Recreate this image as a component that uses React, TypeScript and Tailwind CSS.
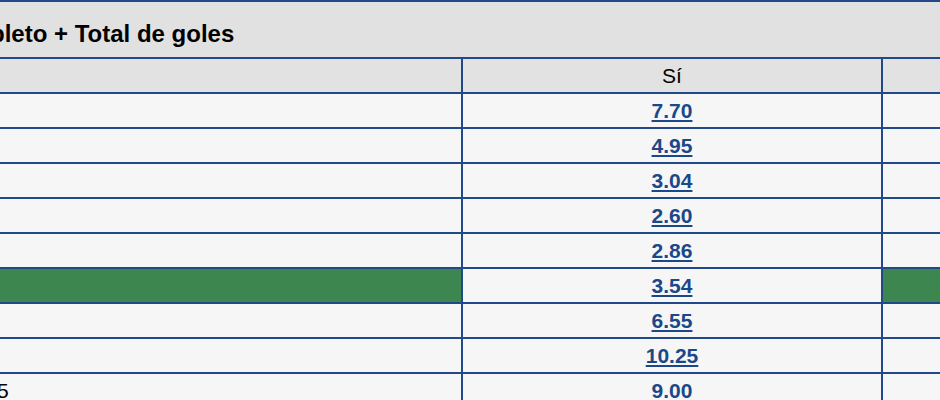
const rows = [
  { label: 'Local y Menos de 1.5', yes: '7.70', no: '1.08' },
  { label: 'Local y Más de 1.5', yes: '4.95', no: '1.16' },
  { label: 'Local y Menos de 2.5', yes: '3.04', no: '1.36' },
  { label: 'Local y Más de 2.5', yes: '2.60', no: '1.48' },
  { label: 'Local y Menos de 3.5', yes: '2.86', no: '1.40' },
  { label: 'Local y Más de 3.5', yes: '3.54', no: '1.28', active: true },
  { label: 'Local y Menos de 4.5', yes: '6.55', no: '1.11' },
  { label: 'Local y Más de 4.5', yes: '10.25', no: '1.04' },
  { label: 'Empate y Menos de 1.5', yes: '9.00', no: '1.06' },
]

const Odd = ({ value }: { value: string }) => (
  <a
    className="font-bold text-[#1b4889] underline decoration-2 underline-offset-[2px]"
    href="#"
  >
    {value}
  </a>
)

export default function App() {
  return (
    <div className="h-[400px] w-[940px] overflow-hidden bg-[#f6f6f6] font-['Liberation_Sans',Arial,sans-serif] text-[21px] text-black">
      <div className="ml-[-221px] w-[1528px]">
        {/* market title, cut off on the left like the original */}
        <div className="flex h-[59px] items-center border-y-2 border-[#21498a] bg-[#e1e1e1] pl-[39px] pt-[8px] text-[24px] font-bold leading-6">
          Resultado completo + Total de goles
        </div>
        <div className="flex h-[35px] border-b-2 border-[#21498a] bg-[#e2e2e2] leading-[33px]">
          <div className="w-[684px] border-r-2 border-[#21498a]" />
          <div className="w-[420px] border-r-2 border-[#21498a] text-center">Sí</div>
          <div className="w-[420px] text-center">No</div>
        </div>
        {rows.map(row => (
          <div
            className="flex h-[35px] border-b-2 border-[#21498a] leading-[33px]"
            key={row.label}
          >
            <div
              className={
                row.active
                  ? 'w-[684px] border-r-2 border-[#21498a] bg-[#3e8650] pl-2 text-white'
                  : 'w-[684px] border-r-2 border-[#21498a] pl-2'
              }
            >
              {row.label}
            </div>
            <div className="w-[420px] border-r-2 border-[#21498a] text-center">
              <Odd value={row.yes} />
            </div>
            <div
              className={
                row.active
                  ? 'w-[420px] bg-[#3e8650] text-center'
                  : 'w-[420px] text-center'
              }
            >
              <Odd value={row.no} />
            </div>
          </div>
        ))}
      </div>
    </div>
  )
}
